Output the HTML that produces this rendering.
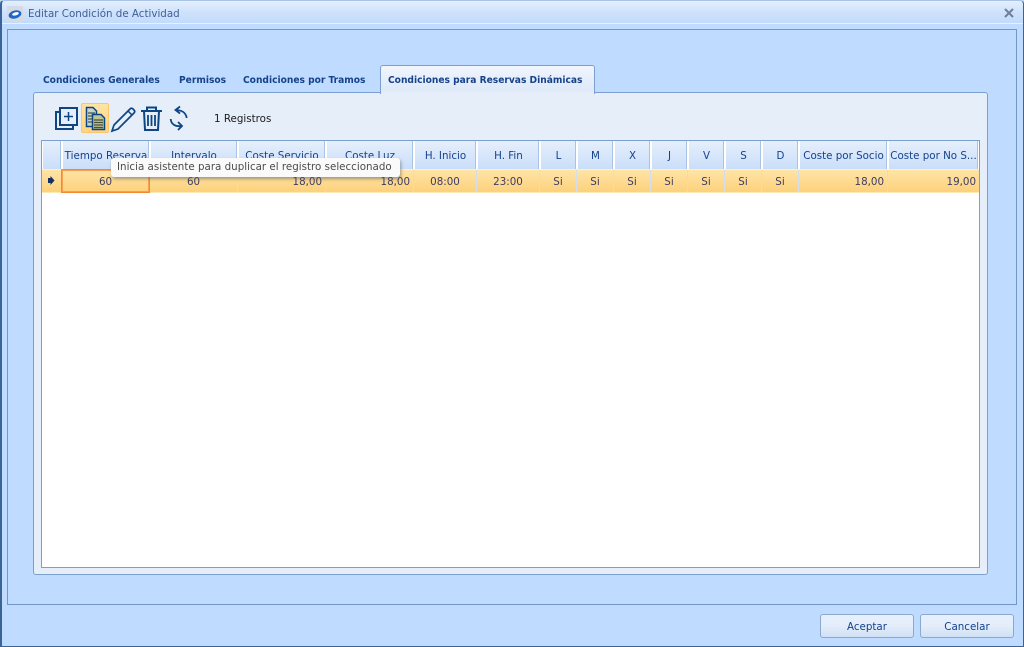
<!DOCTYPE html>
<html><head><meta charset="utf-8">
<style>
html,body{margin:0;padding:0}
body{width:1024px;height:647px;overflow:hidden;position:relative;background:#bfdbff;font-family:"DejaVu Sans","Liberation Sans",sans-serif;font-size:10.3px;color:#15428b}
div{position:absolute;box-sizing:border-box;white-space:nowrap}
#win{left:0;top:0;width:1024px;height:647px;border:1px solid #3b6395;border-left-width:2px;border-top-color:#a9c4e6;border-radius:4px 4px 0 0}
#title{left:2px;top:1px;width:1021px;height:23px;background:linear-gradient(#e4efff,#cfe2fc 50%,#c3dbfb);border-bottom:1px solid #e6f0ff}
.t{line-height:14px}
.tab{top:74px;font-family:"DejaVu Sans Condensed","DejaVu Sans",sans-serif;font-stretch:condensed;font-weight:bold;color:#15428b;font-size:10.15px;line-height:14px}
.h,.c{top:0;text-align:center;line-height:14px}
.h{position:absolute;top:141px;height:28px;padding-top:8px;background:linear-gradient(#e6effc,#cadefa);border-right:1px solid #fff;border-left:1px solid #fff;box-shadow:inset -1px 0 0 #a9c3e6;color:#15428b;overflow:hidden}
.c{top:170px;height:22px;padding-top:5px;color:#3c3c64;border-right:1px solid #d3dfef}
.r{text-align:right;padding-right:3px}
.btn{top:614px;width:94px;height:24px;border:1px solid #8da8cf;border-radius:3px;background:linear-gradient(#e7f0fd,#e3edfb 50%,#cfe0f5);text-align:center;line-height:24px;color:#15428b}
</style></head><body>
<div id="title"></div>
<div id="win"></div>
<svg style="position:absolute;left:7px;top:6px" width="16" height="16" viewBox="0 0 16 16"><rect width="16" height="16" fill="#d6dbe3"/><ellipse cx="8" cy="8.500" rx="6.500" ry="4" fill="#1c67c8" transform="rotate(-15 8 8.500)"/><ellipse cx="8.500" cy="8" rx="3.400" ry="1.600" fill="#fff" transform="rotate(-15 8 8)"/></svg>
<div class="t" style="left:28px;top:7px;color:#3e5f95">Editar Condición de Actividad</div>
<svg style="position:absolute;left:1004px;top:8px" width="10" height="10" viewBox="0 0 10 10"><path d="M1 1L9 9M9 1L1 9" stroke="#6f7f97" stroke-width="2"/></svg>

<div style="left:7px;top:29px;width:1010px;height:576px;border:1px solid #7397c8;background:#bfdbff"></div>

<div class="tab" style="left:43px">Condiciones Generales</div>
<div class="tab" style="left:179px">Permisos</div>
<div class="tab" style="left:243px">Condiciones por Tramos</div>

<div style="left:33px;top:92px;width:955px;height:483px;border:1px solid #7ba0d0;border-radius:3px;background:#e6eefa"></div>
<div style="left:380px;top:65px;width:215px;height:29px;border:1px solid #7ba0d0;border-bottom:0;border-radius:3px 3px 0 0;background:linear-gradient(#f1f6fe,#e6eefa 50%,#dfe9f8 85%,#e6eefa)"></div>
<div class="tab" style="left:388px">Condiciones para Reservas Dinámicas</div>

<div style="left:81px;top:103px;width:28px;height:30px;border:1px solid #fbc66c;border-radius:2px;background:linear-gradient(#fee4a6,#fdd481)"></div>
<svg style="position:absolute;left:50px;top:100px" width="150" height="36" viewBox="0 0 150 36" fill="none" stroke="#0d4585" stroke-width="2">
<path d="M10 12H6V29H23V25"/><rect x="10" y="8" width="17" height="17" fill="#e6eefa"/><path d="M14 16.500H23M18.500 12V21" stroke-width="1.500"/>
<path d="M36.500 7.500H43L46.500 11V26.500H36.500Z" fill="#c9d2c4" stroke-width="1.500"/><path d="M38 13H45M38 16H45M38 19H45M38 22H45" stroke="#3e5a5a" stroke-width="1.200"/>
<path d="M42.500 14.500H51L54.500 18V29.500H42.500Z" fill="#bfc494" stroke-width="1.500"/><path d="M44 20H53M44 22.500H53M44 25H53M44 27.500H53" stroke="#44523a" stroke-width="1.200"/>
<path d="M62 31L64 25L80 9C81 8 82 8 83 9L84 10C85 11 85 12 84 13L68 29Z" stroke-width="1.700"/><path d="M78 11L82 15" stroke-width="1.500"/>
<path d="M91 11H112M97 11V7.500H106V11M94 11L95 30H108L109 11" stroke-width="2"/><path d="M98 15V26M101.500 15V26M105 15V26" stroke-width="1.800"/>
<path d="M136.700 18C136 13 132 10 125.500 10M130 6.500L125.500 10L130 13.500" stroke-width="1.800"/><path d="M120.700 19C121 24 125 27 132 26M128 22L132 26L128 30" stroke-width="1.800"/>
</svg>
<div style="left:214px;top:112px;line-height:14px;color:#1b1b1b">1 Registros</div>

<div style="left:41px;top:140px;width:939px;height:428px;border:1px solid #7ba0d0;background:#fff"></div>
<div class="h" style="left:42px;width:20px"></div>
<div class="h" style="left:62px;width:88px">Tiempo Reserva</div>
<div class="h" style="left:150px;width:88px">Intervalo</div>
<div class="h" style="left:238px;width:88px">Coste Servicio</div>
<div class="h" style="left:326px;width:88px">Coste Luz</div>
<div class="h" style="left:414px;width:63px">H. Inicio</div>
<div class="h" style="left:477px;width:63px">H. Fin</div>
<div class="h" style="left:540px;width:37px">L</div>
<div class="h" style="left:577px;width:37px">M</div>
<div class="h" style="left:614px;width:37px">X</div>
<div class="h" style="left:651px;width:37px">J</div>
<div class="h" style="left:688px;width:37px">V</div>
<div class="h" style="left:725px;width:37px">S</div>
<div class="h" style="left:762px;width:37px">D</div>
<div class="h" style="left:799px;width:89px">Coste por Socio</div>
<div class="h" style="left:888px;width:91px">Coste por No S...</div>

<div style="left:42px;top:169px;width:937px;height:24px;background:linear-gradient(#fee4a6,#fdd17c);border-top:1px solid #fff0c8;border-bottom:1px solid #fde9b4"></div>
<div class="c" style="left:42px;width:20px"></div>
<div class="c" style="left:150px;width:88px">60</div>
<div class="c r" style="left:238px;width:88px">18,00</div>
<div class="c r" style="left:326px;width:88px">18,00</div>
<div class="c" style="left:414px;width:63px">08:00</div>
<div class="c" style="left:477px;width:63px">23:00</div>
<div class="c" style="left:540px;width:37px">Si</div>
<div class="c" style="left:577px;width:37px">Si</div>
<div class="c" style="left:614px;width:37px">Si</div>
<div class="c" style="left:651px;width:37px">Si</div>
<div class="c" style="left:688px;width:37px">Si</div>
<div class="c" style="left:725px;width:37px">Si</div>
<div class="c" style="left:762px;width:37px">Si</div>
<div class="c r" style="left:799px;width:89px">18,00</div>
<div class="c r" style="left:888px;width:91px;border-right:0">19,00</div>
<div class="c" style="left:61px;top:169px;width:89px;height:24px;padding-top:5px;border:1px solid #f58a32;box-shadow:inset 0 0 0 1px #f9a04e">60</div>
<svg style="position:absolute;left:48px;top:176px" width="7" height="9" viewBox="0 0 7 9"><path d="M0 2H2.500V0L6.500 4.500L2.500 9V7H0Z" fill="#14305f"/></svg>

<div style="left:111px;top:158px;width:289px;height:19px;background:#fafafa;border-radius:3px;box-shadow:1px 2px 3px rgba(90,90,90,.55);line-height:19px;padding-left:6px;color:#4c4c4c">Inicia asistente para duplicar el registro seleccionado</div>

<div class="btn" style="left:820px">Aceptar</div>
<div class="btn" style="left:920px">Cancelar</div>
</body></html>
